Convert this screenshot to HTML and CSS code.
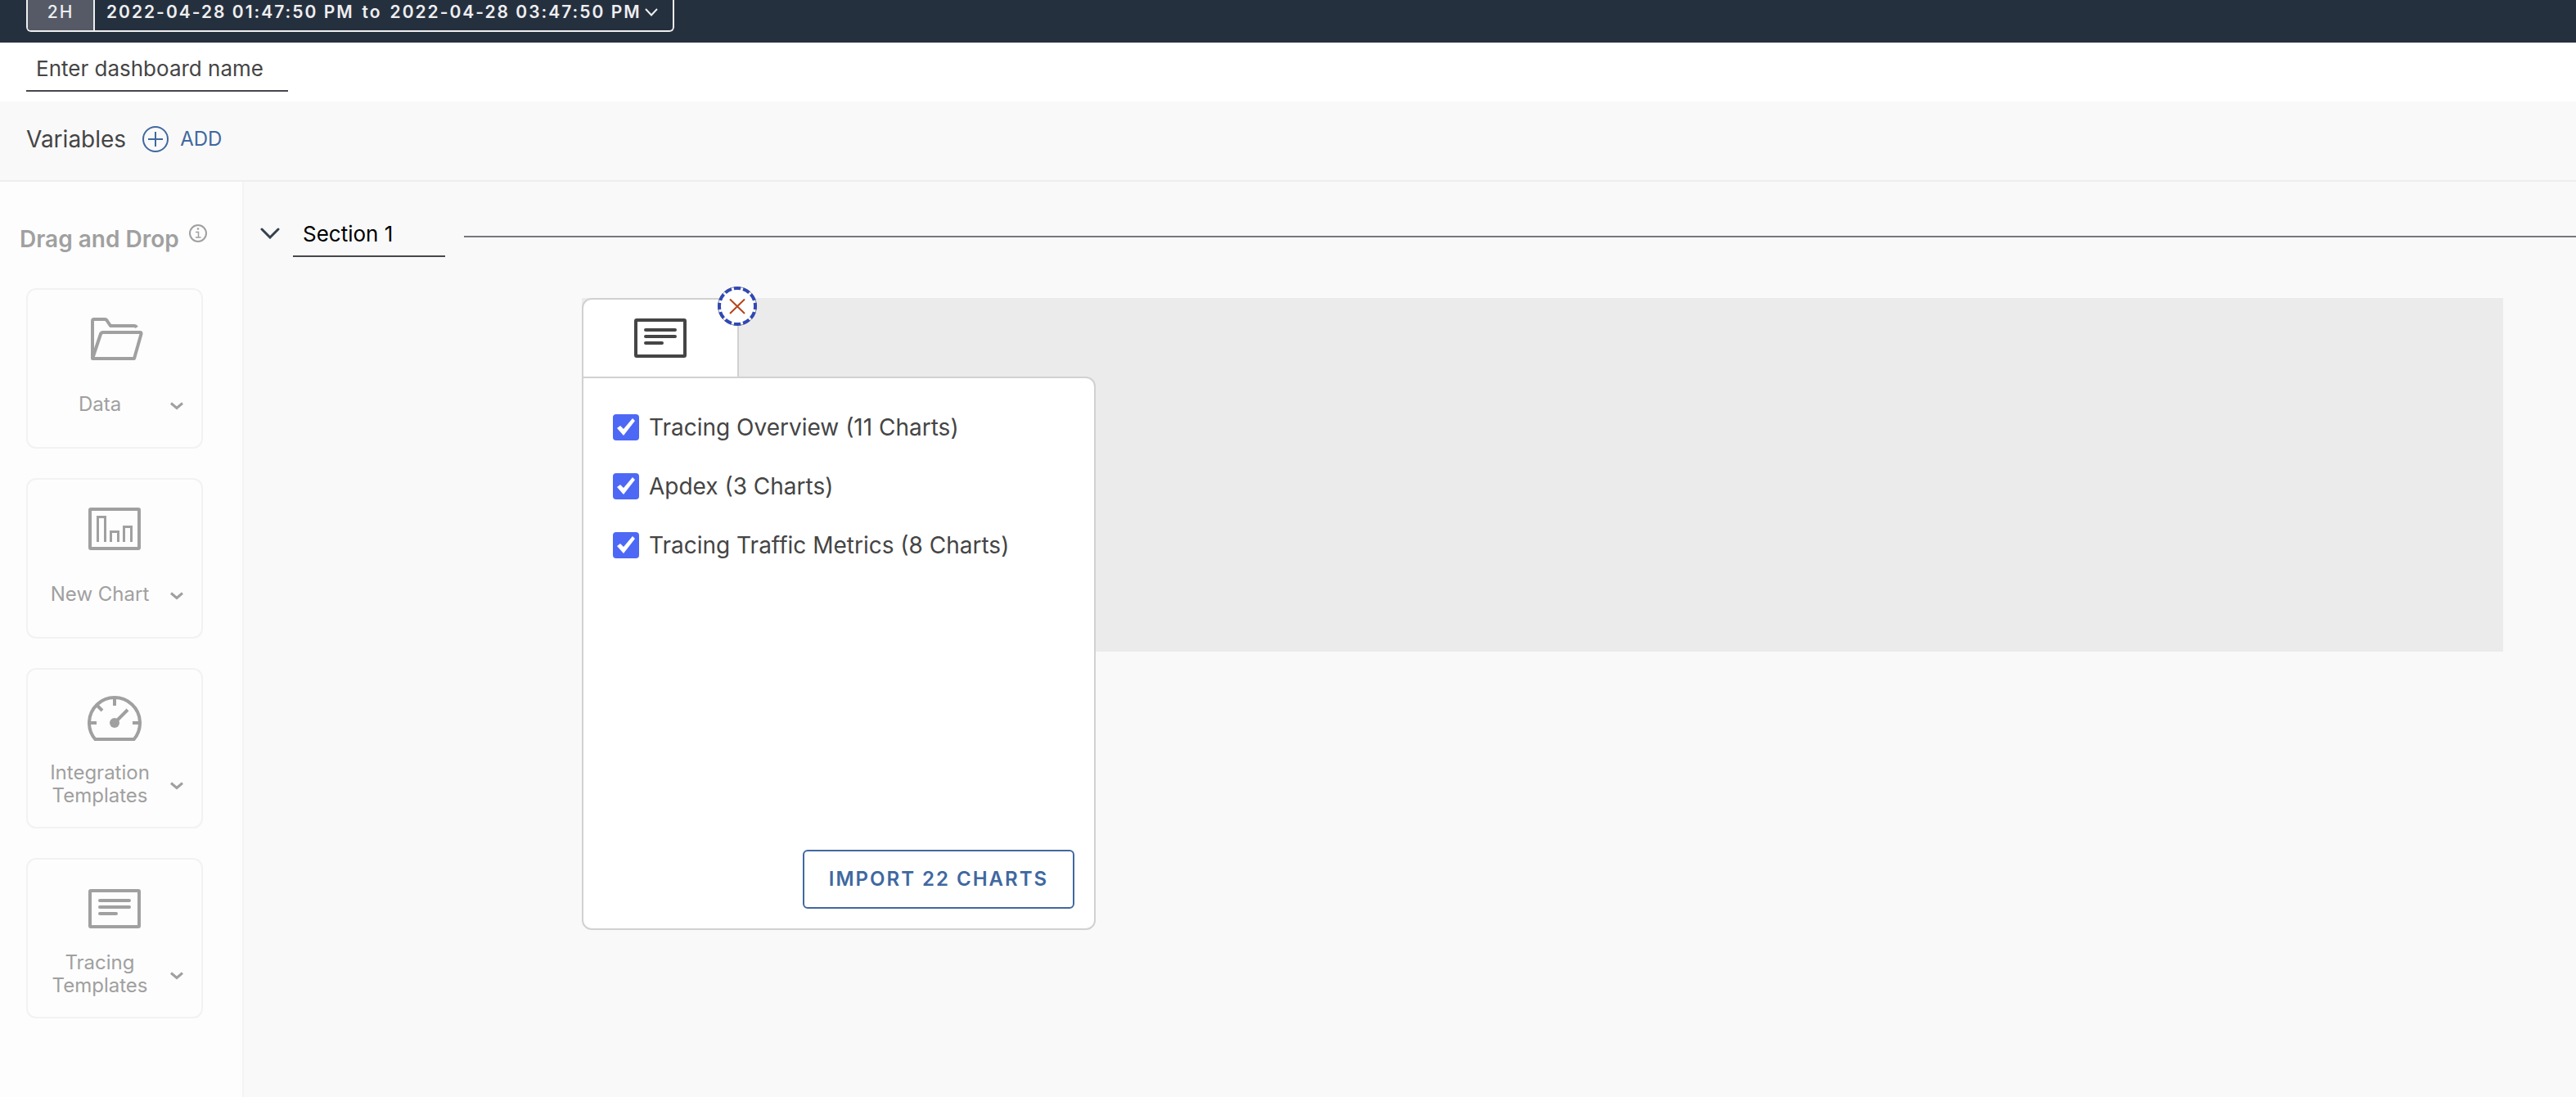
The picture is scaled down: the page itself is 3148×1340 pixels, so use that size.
FILE: index.html
```html
<!DOCTYPE html>
<html lang="en">
<head>
<meta charset="utf-8">
<title>Dashboard editor</title>
<link rel="stylesheet" href="styles.css">
</head>
<body>
<svg class="defs" aria-hidden="true">
  <symbol id="caret" viewBox="0 0 16 10"><path d="M1 1.5 8 7.5 15 1.5" fill="none" stroke="currentColor" stroke-width="3"/></symbol>
  <symbol id="note" viewBox="0 0 64 48">
    <rect x="2" y="2" width="60" height="44" rx="1" fill="none" stroke="currentColor" stroke-width="4"/>
    <path d="M14 14H50M14 22H50M14 30H34" fill="none" stroke="currentColor" stroke-width="4" stroke-linecap="round"/>
  </symbol>
</svg>
<header class="topbar">
  <div class="range">
    <button class="range-preset" type="button">2H</button>
    <button class="range-dates" type="button">
      <span>2022-04-28 01:47:50 PM</span><span>to</span><span class="range-end">2022-04-28 03:47:50 PM
      <svg class="range-caret" viewBox="0 0 16 10"><path d="M1 1 8 8.500 15 1" fill="none" stroke="currentColor" stroke-width="2"/></svg></span>
    </button>
  </div>
</header>
<div class="namebar">
  <input class="line-input name-input" type="text" aria-label="Dashboard name" placeholder="Enter dashboard name">
</div>
<div class="variables">
  <span class="variables-title">Variables</span>
  <button class="add" type="button">
    <svg width="32" height="32" viewBox="0 0 32 32" fill="none" stroke="currentColor" stroke-width="2"><circle cx="16" cy="16" r="15"/><path d="M16 7V25M7 16H25"/></svg>
    ADD
  </button>
</div>
<div class="workspace">
  <aside class="sidebar">
    <h2 class="sidebar-title">Drag and Drop
      <svg width="22" height="22" viewBox="0 0 22 22" fill="none" stroke="currentColor" stroke-width="2"><circle cx="11" cy="11" r="10"/><path d="M8 9.500H11.500V16M8 16H14.500" stroke-width="1.500"/><circle cx="11" cy="5.500" r="1.300" fill="currentColor" stroke="none"/></svg>
    </h2>
    <div class="tiles">
      <button class="tile" type="button">
        <svg class="tile-icon folder" viewBox="0 0 64 52" fill="none" stroke="currentColor" stroke-width="4" stroke-linejoin="round"><path d="M2 50V4Q2 2 4 2H17Q19 2 20 4L24 10H53Q55 10 56 12"/><path d="M2 50 12 20Q12.500 18 15 18H60Q62 18 61.500 20L53 50Z"/></svg>
        <span class="tile-row"><span class="tile-label">Data</span><svg class="caret"><use href="#caret"/></svg></span>
      </button>
      <button class="tile" type="button">
        <svg class="tile-icon" viewBox="0 0 64 52" fill="none" stroke="currentColor"><rect x="2" y="2" width="60" height="48" rx="1" stroke-width="4"/><path d="M11.500 42V11.500H20.500V42M27.500 42V29.500H36.500V42M43.500 42V23.500H52.500V42" stroke-width="3"/></svg>
        <span class="tile-row"><span class="tile-label">New Chart</span><svg class="caret"><use href="#caret"/></svg></span>
      </button>
      <button class="tile" type="button">
        <svg class="tile-icon gauge" viewBox="0 0 66 56" fill="none" stroke="currentColor" stroke-width="4"><path d="M9.300 53A31 31 0 1 1 56.700 53Z"/><path d="M33 2V12M2 33H11M55 33H64M12 12 18 18M34 32 49 17"/><circle cx="33" cy="33" r="6" fill="currentColor" stroke="none"/></svg>
        <span class="tile-row"><span class="tile-label">Integration Templates</span><svg class="caret"><use href="#caret"/></svg></span>
      </button>
      <button class="tile" type="button">
        <svg class="tile-icon"><use href="#note"/></svg>
        <span class="tile-row"><span class="tile-label">Tracing Templates</span><svg class="caret"><use href="#caret"/></svg></span>
      </button>
    </div>
  </aside>
  <main class="canvas">
    <div class="section-head">
      <button class="collapse" type="button" aria-label="Collapse section">
        <svg width="24" height="14" viewBox="0 0 24 14"><path d="M2 2 12 12 22 2" fill="none" stroke="currentColor" stroke-width="3" stroke-linecap="round"/></svg>
      </button>
      <input class="line-input section-input" type="text" aria-label="Section name" value="Section 1">
      <div class="rule"></div>
    </div>
    <div class="dropzone">
      <div class="tab">
        <svg class="tab-icon"><use href="#note"/></svg>
        <button class="close" type="button" aria-label="Remove">
          <svg width="48" height="48" viewBox="0 0 48 48" fill="none"><circle cx="24" cy="24" r="23.500" fill="#fff" stroke="#8c8c8c"/><circle cx="24" cy="24" r="22" stroke="#3148b4" stroke-width="4" pathLength="96" stroke-dasharray="6 2" stroke-dashoffset="3"/><path d="M15 15.500 33 33M33 15.500 15 33" stroke="#b8431a" stroke-width="2"/></svg>
        </button>
      </div>
      <form class="panel">
        <label class="option"><input type="checkbox" checked>Tracing Overview (11 Charts)</label>
        <label class="option"><input type="checkbox" checked>Apdex (3 Charts)</label>
        <label class="option"><input type="checkbox" checked>Tracing Traffic Metrics (8 Charts)</label>
        <button class="import" type="button">IMPORT 22 CHARTS</button>
      </form>
    </div>
  </main>
</div>
</body>
</html>
```
FILE: styles.css
```css
* { box-sizing: border-box; }
body {
  margin: 0;
  min-height: 100vh;
  display: flex;
  flex-direction: column;
  background: #f9f9f9;
  color: #454545;
  font: 26px/36px Inter, "Open Sans", sans-serif;
}
button, input { font: inherit; color: inherit; letter-spacing: inherit; }
button { margin: 0; padding: 0; border: 0; background: none; cursor: pointer; }
svg { flex: none; display: block; }
.defs { position: absolute; width: 0; height: 0; }

.topbar {
  display: flex;
  align-items: flex-start;
  height: 52px;
  padding-left: 32px;
  background: #25303f;
  color: #eeeef0;
}
.range {
  display: flex;
  height: 39px;
  border: 2px solid #eeeef0;
  border-top: 0;
  border-radius: 0 0 6px 6px;
  overflow: hidden;
  font-size: 21px;
  line-height: 28px;
  font-weight: 600;
  letter-spacing: 2px;
}
.range button { padding-bottom: 7px; }
.range .range-preset { width: 82px; background: #555a66; border-right: 2px solid #eeeef0; font-weight: 500; }
.range .range-dates { display: flex; align-items: center; gap: 10px; padding-left: 14px; padding-right: 18px; }
.range-end { display: flex; align-items: center; gap: 4px; }
.range-caret { width: 16px; height: 10px; }

.namebar { height: 72px; padding-left: 32px; background: #fff; }
.line-input {
  height: 60px;
  padding: 4px 12px 0;
  border: 0;
  border-bottom: 2px solid #49454d;
  border-radius: 0;
  background: none;
  outline: 0;
}
.name-input { width: 320px; }
.name-input::placeholder { color: inherit; opacity: 1; }

.variables {
  display: flex;
  align-items: center;
  gap: 20px;
  height: 96px;
  padding: 0 32px 4px;
}
.variables-title { font-size: 28px; }
.add { display: flex; align-items: center; gap: 14px; font-size: 24px; color: #4068a0; }

.workspace { flex: 1; display: flex; border-top: 2px solid #eee; }
.sidebar {
  width: 298px;
  flex: none;
  padding: 50px 24px 40px;
  border-right: 2px solid #f4f4f4;
  background: #fdfdfd;
  color: #a0a0a0;
}
.sidebar-title {
  display: flex;
  align-items: flex-start;
  gap: 12px;
  height: 44px;
  margin: 0;
  font-size: 28px;
  line-height: 40px;
  font-weight: 600;
  white-space: nowrap;
}
.sidebar-title svg { margin-top: 2px; }
.tiles { display: flex; flex-direction: column; gap: 36px; margin: 36px 24px 0 8px; }
.tile {
  display: flex;
  flex-direction: column;
  align-items: center;
  justify-content: space-between;
  height: 196px;
  padding: 34px 20px 24px;
  border: 2px solid #f2f2f2;
  border-radius: 12px;
  font-size: 24px;
  line-height: 28px;
}
.tile-icon { width: 64px; height: 52px; }
.folder { margin-left: 6px; }
.gauge { width: 66px; height: 56px; margin-top: -2px; }
.tile-row { display: flex; align-items: center; width: 172px; height: 56px; }
.tile-label { width: 136px; text-align: center; }
.caret { width: 16px; height: 10px; margin: 4px 0 0 18px; }

.canvas { flex: 1; min-width: 0; }
.section-head { display: flex; align-items: center; padding-top: 32px; }
.collapse { margin: 2px 16px 0 20px; color: #36424d; }
.section-input { width: 186px; color: #000; }
.rule { flex: 1; height: 2px; margin: 10px 0 0 23px; background: #7a767c; }

.dropzone { position: relative; height: 432px; margin: 50px 89px 0 413px; background: #ebebeb; }
.tab {
  position: relative;
  display: flex;
  justify-content: center;
  width: 192px;
  height: 98px;
  padding-top: 23px;
  border: 2px solid #d1d1d1;
  border-radius: 12px 0 0 0;
  background: #fff;
}
.tab-icon { width: 64px; height: 48px; }
.close { position: absolute; top: -16px; right: -24px; z-index: 2; }
.panel {
  position: absolute;
  top: 96px;
  left: 0;
  width: 628px;
  min-height: 676px;
  display: flex;
  flex-direction: column;
  padding: 42px 24px 24px 36px;
  border: 2px solid #d1d1d1;
  border-radius: 0 12px 12px 12px;
  background: #fff;
}
.option { display: flex; align-items: center; gap: 12px; margin: 0 0 36px; font-size: 28px; }
.option input {
  appearance: none;
  width: 32px;
  height: 32px;
  margin: 2px 0;
  border-radius: 4px;
  background: #4d68f5;
}
.option input:checked::before {
  content: "";
  display: block;
  width: 32px;
  height: 32px;
  background: #fff;
  clip-path: polygon(5px 17px, 9px 14px, 13px 18px, 24px 5px, 27px 8px, 13px 26px);
}
.import {
  align-self: flex-end;
  margin-top: auto;
  height: 72px;
  min-width: 332px;
  padding: 0 24px;
  border: 2px solid #4068a0;
  border-radius: 6px;
  color: #4068a0;
  font-size: 24px;
  font-weight: 600;
  letter-spacing: 2px;
}
```
